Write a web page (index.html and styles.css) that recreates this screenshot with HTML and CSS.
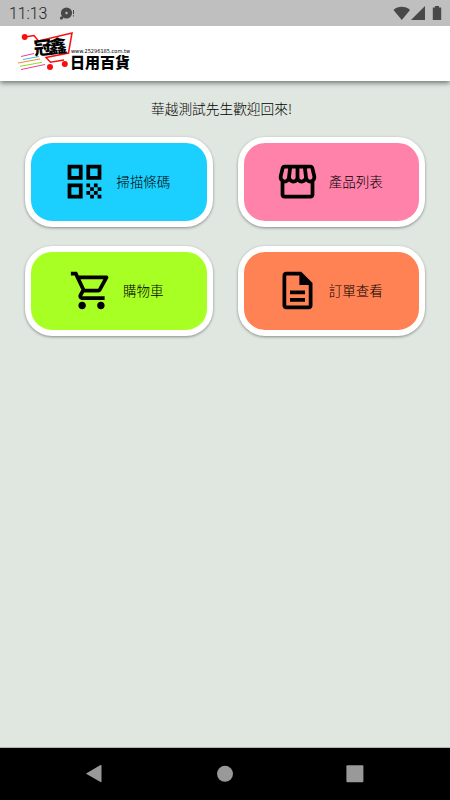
FILE: index.html
```html
<!DOCTYPE html>
<html lang="zh-Hant">

<head>
    <meta charset="UTF-8">
    <meta name="viewport" content="width=device-width, initial-scale=1.0">
    <title>冠鑫日用百貨</title>

    <link rel="stylesheet" href="styles.css">
</head>

<body>
    <div class="status">
        <span class="time">11:13</span>
        <svg class="notice" width="16" height="14" viewBox="0 0 16 14">
            <circle cx="6.500" cy="6" r="5.600" />
            <circle cx="1.500" cy="11" r="1.600" />
            <path d="M1.500 11l4-4" stroke="#484848" stroke-width="1.5" />
            <circle class="hole" cx="6.500" cy="6" r="1.200" />
            <path d="M13 3h1v4h-1zM13 8.300h1v1.200h-1z" />
        </svg>
        <svg class="signal" width="50" height="16" viewBox="0 0 50 16">
            <path d="M0.500 4C5-.3 12.500-.3 17 4L8.800 14z" />
            <path d="M32 0v14H18z" />
            <path d="M42 0h4v1.500h2.200V14h-8.400V1.500H42z" />
        </svg>
    </div>

    <div class="header">
        <svg class="logo" width="120" height="44" viewBox="15 30 120 44">
            <g fill="none" stroke-width="1">
                <path stroke="#f0389c" d="M21 56.500l13-3M21 69.500l24-5" />
                <path stroke="#45bde0" d="M23 59.500l16-3" />
                <path stroke="#f08a30" d="M18 63l22-4" />
                <path stroke="#8ce020" d="M20 66.300l22-4" />
            </g>
            <g fill="none" stroke="#fc0d0d" stroke-width="1.500">
                <path d="M24.500 37l9.500-1.500 4.500 5.500L72 33l-3.500 20L46 57.500l4.500 4.800L64 60" />
            </g>
            <g fill="#fc0d0d">
                <circle cx="24.700" cy="37" r="2.900" />
                <circle cx="50" cy="67" r="3" />
                <circle cx="64.800" cy="64" r="3" />
            </g>
            <text class="brand" x="0" y="0" transform="translate(34.500 55.300) rotate(-6)" textLength="33">冠鑫</text>
            <text class="url" x="71" y="52.500" textLength="59" lengthAdjust="spacingAndGlyphs">www.25296185.com.tw</text>
            <text class="name" x="70" y="67.800" textLength="60">日用百貨</text>
        </svg>
    </div>

    <div class="main">
        <p class="welcome">華越測試先生歡迎回來!</p>

        <div class="menu">
            <div class="item scan">
                <svg viewBox="0 0 24 24">
                    <path d="M3 11h8V3H3zm2-6h4v4H5zM3 21h8v-8H3zm2-6h4v4H5zM13 3v8h8V3zm6 6h-4V5h4zM19 19h2v2h-2zM13 13h2v2h-2zM15 15h2v2h-2zM13 17h2v2h-2zM15 19h2v2h-2zM17 17h2v2h-2zM17 13h2v2h-2zM19 15h2v2h-2z" />
                </svg>
                <span>掃描條碼</span>
            </div>
            <div class="item product">
                <svg viewBox="0 0 24 24">
                    <path d="M21.900 8.890l-1.050-4.370c-.22-.9-1-1.520-1.910-1.520H5.050c-.9 0-1.690.63-1.900 1.520L2.100 8.890c-.24 1.020-.02 2.060.62 2.880.08.11.19.19.28.290V19c0 1.100.9 2 2 2h14c1.100 0 2-.9 2-2v-6.940c.09-.09.2-.18.28-.28.640-.82.870-1.870.620-2.890zM18.910 4.990l1.050 4.370c.1.420.01.84-.25 1.170-.14.180-.44.470-.94.470-.61 0-1.140-.49-1.210-1.140L16.980 5l1.930-.01zM13 5h1.960l.54 4.520c.05.390-.07.780-.33 1.070-.22.260-.54.410-.95.410-.67 0-1.220-.59-1.220-1.310V5zM8.490 9.520L9.040 5H11v4.690c0 .720-.55 1.310-1.290 1.310-.34 0-.65-.15-.89-.41-.25-.29-.37-.68-.33-1.070zM4.040 9.360L5.050 5h1.970l-.58 4.860c-.08.650-.6 1.140-1.210 1.140-.49 0-.8-.29-.93-.47-.27-.32-.36-.75-.26-1.170zM5 19v-6.030c.08.010.15.030.23.030.870 0 1.660-.36 2.240-.95.600.600 1.400.950 2.310.950.870 0 1.650-.36 2.230-.93.590.570 1.390.930 2.290.930.840 0 1.640-.35 2.240-.95.580.590 1.370.950 2.240.950.080 0 .150-.02.230-.03V19H5z" />
                </svg>
                <span>產品列表</span>
            </div>
            <div class="item cart">
                <svg viewBox="0 0 24 24">
                    <path d="M15.550 13c.75 0 1.410-.41 1.750-1.030l3.580-6.490c.37-.66-.11-1.480-.87-1.480H5.210l-.94-2H1v2h2l3.600 7.590-1.350 2.440C4.520 15.370 5.480 17 7 17h12v-2H7l1.100-2h7.450zM6.160 6h12.150l-2.760 5H8.530L6.160 6zM7 18c-1.100 0-1.990.9-1.990 2S5.900 22 7 22s2-.9 2-2-.9-2-2-2zm10 0c-1.100 0-1.990.9-1.990 2s.89 2 1.990 2 2-.9 2-2-.9-2-2-2z" />
                </svg>
                <span>購物車</span>
            </div>
            <div class="item order">
                <svg viewBox="0 0 24 24">
                    <path d="M8 16h8v2H8zm0-4h8v2H8zm6-10H6c-1.100 0-2 .9-2 2v16c0 1.100.890 2 1.990 2H18c1.100 0 2-.9 2-2V8l-6-6zm4 18H6V4h7v5h5v11z" />
                </svg>
                <span>訂單查看</span>
            </div>
        </div>
    </div>

    <div class="nav">
        <svg width="18" height="20" viewBox="0 0 18 20">
            <path d="M1.500 9.200L15.500 1q1-.4 1 .6v16q0 1-1 .5L1.500 10q-.7-.4 0-.8z" />
        </svg>
        <svg width="18" height="20" viewBox="0 0 18 20">
            <circle cx="9" cy="9.800" r="8" />
        </svg>
        <svg width="18" height="20" viewBox="0 0 18 20">
            <rect x=".4" y="1.200" width="17" height="17" rx="1" />
        </svg>
    </div>
</body>

</html>
```

FILE: styles.css
```css
* {
    margin: 0;
    padding: 0;
    box-sizing: border-box;
}

body {
    display: flex;
    flex-direction: column;
    height: 800px;
    background: #e0e7e0;
    color: #000;
    font-family: "Noto Sans CJK TC", sans-serif;
}

.status {
    display: flex;
    height: 26px;
    padding: 6px 7px 0 9px;
    background: #bfbfbf;
    fill: #484848;
}

.status .time {
    width: 51px;
    color: #222;
    font: 16px/16px Roboto, sans-serif;
    font-weight: 300;
    letter-spacing: -0.1px;
}

.status .notice {
    margin-top: 1px;
}

.status .hole {
    fill: #bfbfbf;
}

.status .signal {
    margin-left: auto;
}

.header {
    height: 55px;
    padding: 4px 15px;
    background: #fff;
    box-shadow: 0 2px 5px rgba(0, 0, 0, .5);
    clip-path: inset(0 0 -12px 0);
}

.logo {
    display: block;
}

.logo .brand {
    font-size: 18px;
    font-weight: 900;
}

.logo .url {
    font: 5.5px "DejaVu Sans", sans-serif;
}

.logo .name {
    font-size: 15px;
    font-weight: 900;
}

.main {
    flex: 1;
    padding: 17px 25px 0;
    border-bottom: 1px solid #b0b5b0;
}

.welcome {
    height: 39px;
    padding-right: 7px;
    font-size: 13.7px;
    font-weight: 300;
    line-height: 20px;
    text-align: center;
}

.menu {
    display: grid;
    grid-template-columns: 1fr 1fr;
    gap: 19px 25px;
}

.item {
    display: flex;
    align-items: center;
    justify-content: center;
    height: 90px;
    padding: 0 5px 1px 0;
    border: 6px solid #fff;
    border-radius: 27px;
    font-size: 13.5px;
    font-weight: 300;
    box-shadow: 0 1px 3px rgba(0, 0, 0, .4);
}

.item svg {
    width: 45px;
    height: 45px;
    margin-right: 9px;
}

.item span {
    margin-top: -1px;
}

.scan {
    background: #1bd0ff;
}

.product {
    background: #ff82ab;
}

.cart {
    background: #a8ff24;
}

.order {
    background: #ff8254;
}

.nav {
    display: flex;
    justify-content: space-between;
    height: 52px;
    padding: 16px 86px 0 85px;
    background: #000;
    fill: #999;
}
```
